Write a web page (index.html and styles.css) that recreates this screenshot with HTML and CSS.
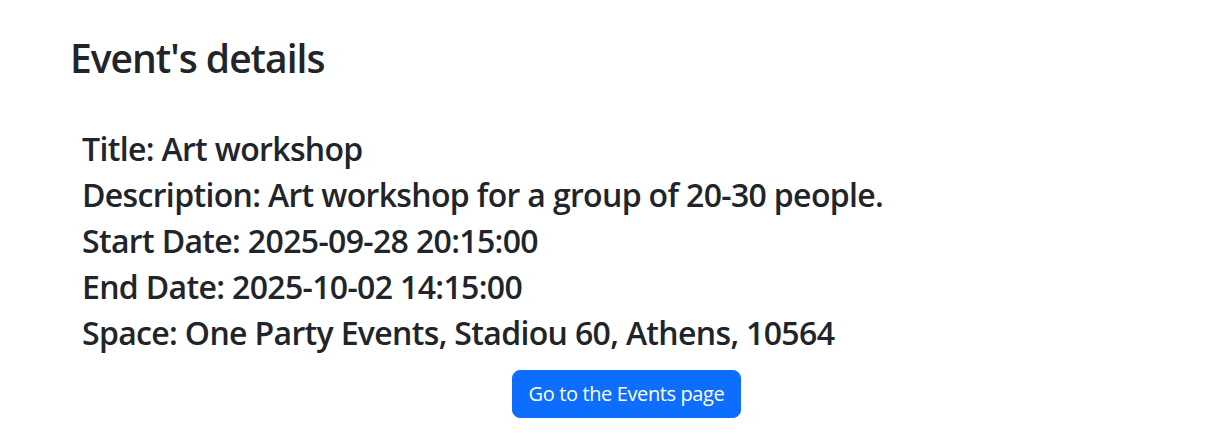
FILE: index.html
```html
<!DOCTYPE html>
<html lang="en">
<head>
<meta charset="utf-8">
<title>Event's details</title>
<link rel="stylesheet" href="styles.css">
</head>
<body>
<main class="page">
  <h1 class="page-title">Event's details</h1>
  <section class="details">
    <h2 class="detail">Title: Art workshop</h2>
    <h2 class="detail">Description: Art workshop for a group of 20-30 people.</h2>
    <h2 class="detail">Start Date: 2025-09-28 20:15:00</h2>
    <h2 class="detail">End Date: 2025-10-02 14:15:00</h2>
    <h2 class="detail">Space: One Party Events, Stadiou 60, Athens, 10564</h2>
  </section>
  <div class="actions">
    <a class="btn" href="#">Go to the Events page</a>
  </div>
</main>
</body>
</html>
```

FILE: styles.css
```css
* { box-sizing: border-box; }
html, body { margin: 0; padding: 0; }
body {
  font-family: "Open Sans", "Noto Sans", sans-serif;
  color: #212529;
  background: #fff;
}
.page {
  padding: 34px 34px 0 70px;
}
.page-title {
  margin: 0 0 48px 0;
  font-size: 39px;
  line-height: 48px;
  font-weight: 600;
  letter-spacing: -1px;
}
.details {
  padding-left: 12px;
}
.detail {
  margin: 0 0 8px 0;
  font-size: 32px;
  line-height: 38px;
  font-weight: 600;
  letter-spacing: -0.66px;
}
.actions {
  display: flex;
  justify-content: center;
  margin-top: 18px;
}
.btn {
  display: inline-block;
  background: #0d6efd;
  color: #fff;
  text-decoration: none;
  font-size: 20px;
  line-height: 30px;
  padding: 8px 16px;
  border: 1px solid #0d6efd;
  border-radius: 8px;
  letter-spacing: -0.38px;
}
```
